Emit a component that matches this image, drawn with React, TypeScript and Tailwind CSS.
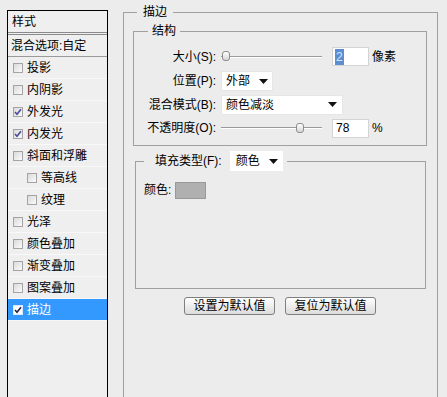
import React from 'react';

const font = { fontFamily: '"Liberation Sans", "Noto Sans CJK SC", sans-serif' };

type Row = { label: string; checked?: boolean; indent?: boolean; active?: boolean };

const rows: Row[] = [
  { label: '投影' },
  { label: '内阴影' },
  { label: '外发光', checked: true },
  { label: '内发光', checked: true },
  { label: '斜面和浮雕' },
  { label: '等高线', indent: true },
  { label: '纹理', indent: true },
  { label: '光泽' },
  { label: '颜色叠加' },
  { label: '渐变叠加' },
  { label: '图案叠加' },
  { label: '描边', checked: true, active: true },
];

function Check({ checked, active }: { checked?: boolean; active?: boolean }) {
  return (
    <span
      className={
        active
          ? 'flex h-[10px] w-[10px] items-center justify-center border border-[#d8e8ff] bg-white'
          : 'flex h-[10px] w-[10px] items-center justify-center border border-[#a4a4a4] bg-gradient-to-br from-[#dadada] to-[#fbfbfb]'
      }
    >
      {checked && (
        <svg width="8" height="8" viewBox="0 0 8 8">
          <path d="M1 4 L3 6.2 L7 1.2" fill="none" stroke={active ? '#222244' : '#4a4a9a'} strokeWidth="1.6" />
        </svg>
      )}
    </span>
  );
}

function Arrow() {
  return (
    <svg width="9" height="5" viewBox="0 0 9 5">
      <path d="M0 0 H9 L4.5 5 Z" fill="#111" />
    </svg>
  );
}

function Slider({ pos }: { pos: number }) {
  return (
    <div className="relative flex h-[19px] w-[101px] items-center">
      <div className="h-[2px] w-full border-t border-[#9a9a9a] border-b border-b-white" />
      <div
        className="absolute top-[4px] h-[10px] w-[8px] rounded-[3px] border border-[#8c8c8c] bg-gradient-to-b from-white to-[#d6d6d6]"
        style={{ left: pos }}
      />
    </div>
  );
}

function Label({ children }: { children: React.ReactNode }) {
  return <div className="w-[82px] shrink-0 text-right">{children}</div>;
}

export default function App() {
  return (
    <div className="flex h-[397px] w-[447px] items-start overflow-hidden bg-[#ececec] text-[12px] leading-4 text-black" style={font}>
      <div className="ml-[7px] mt-[10px] h-[400px] w-[101px] shrink-0 border border-b-0 border-black bg-[#efefef]">
        <div className="flex h-[24px] items-center border-b-[3px] border-double border-[#8a8a8a] pl-[4px]">样式</div>
        <div className="flex h-[22px] items-center border-b border-[#9a9a9a] pl-[3px]">混合选项:自定</div>
        {rows.map((r) => (
          <div
            key={r.label}
            className={
              r.active
                ? 'flex h-[22px] items-center gap-[4px] border-b border-[#f7f7f7] bg-[#3399ff] text-white'
                : 'flex h-[22px] items-center gap-[4px] border-b border-[#f8f8f8]'
            }
            style={{ paddingLeft: r.indent ? 19 : 5 }}
          >
            <Check checked={r.checked} active={r.active} />
            <span>{r.label}</span>
          </div>
        ))}
      </div>

      <fieldset className="ml-[15px] mt-[4px] h-[420px] w-[315px] shrink-0 border border-[#a0a0a0] px-[9px] pt-[3px]">
        <legend className="ml-[4px] px-[6px] leading-4">描边</legend>

        <fieldset className="w-[294px] border border-[#a0a0a0] pb-[5px] pt-[5px]">
          <legend className="ml-[14px] px-[4px] leading-4">结构</legend>
          <div className="flex h-[25px] items-center gap-[5px]">
            <Label>大小(S):</Label>
            <Slider pos={1} />
            <div className="ml-[5px] flex h-[19px] w-[37px] items-center border border-[#d4d4d4] bg-white pl-[2px]">
              <span className="bg-[#5b8fd2] px-[1px] text-[#d6e6fa]">2</span>
            </div>
            <span className="-ml-[2px]">像素</span>
          </div>
          <div className="flex h-[24px] items-center gap-[5px]">
            <Label>位置(P):</Label>
            <div className="flex h-[20px] w-[52px] items-center justify-between border border-[#e6e6e6] bg-white pl-[4px] pr-[4px]">
              <span>外部</span>
              <Arrow />
            </div>
          </div>
          <div className="flex h-[23px] items-center gap-[5px]">
            <Label>混合模式(B):</Label>
            <div className="flex h-[20px] w-[122px] items-center justify-between border border-[#e6e6e6] bg-white pl-[4px] pr-[5px]">
              <span>颜色减淡</span>
              <Arrow />
            </div>
          </div>
          <div className="flex h-[24px] items-center gap-[5px]">
            <Label>不透明度(O):</Label>
            <Slider pos={75} />
            <div className="ml-[5px] flex h-[19px] w-[37px] items-center border border-[#d4d4d4] bg-white pl-[3px]">78</div>
            <span className="-ml-[2px]">%</span>
          </div>
        </fieldset>

        <fieldset className="ml-[2px] mt-[5px] h-[138px] w-[291px] border border-[#a0a0a0] pl-[8px] pt-[10px]">
          <legend className="flex items-center pl-[11px] pr-[4px]">
            <span>填充类型(F):</span>
            <div className="ml-[8px] flex h-[20px] w-[53px] items-center justify-between bg-white pl-[6px] pr-[5px]">
              <span>颜色</span>
              <Arrow />
            </div>
          </legend>
          <div className="flex h-[18px] items-center gap-[4px]">
            <span>颜色:</span>
            <div className="h-[17px] w-[31px] border border-[#999] bg-[#b0b0b0]" />
          </div>
        </fieldset>

        <div className="mt-[8px] flex w-[294px] justify-center gap-[10px]">
          <button className="h-[18px] w-[91px] rounded-[3px] border border-[#7f7f7f] bg-gradient-to-b from-white to-[#dcdcdc] text-[12px] leading-4">
            设置为默认值
          </button>
          <button className="h-[18px] w-[91px] rounded-[3px] border border-[#7f7f7f] bg-gradient-to-b from-white to-[#dcdcdc] text-[12px] leading-4">
            复位为默认值
          </button>
        </div>
      </fieldset>
    </div>
  );
}
